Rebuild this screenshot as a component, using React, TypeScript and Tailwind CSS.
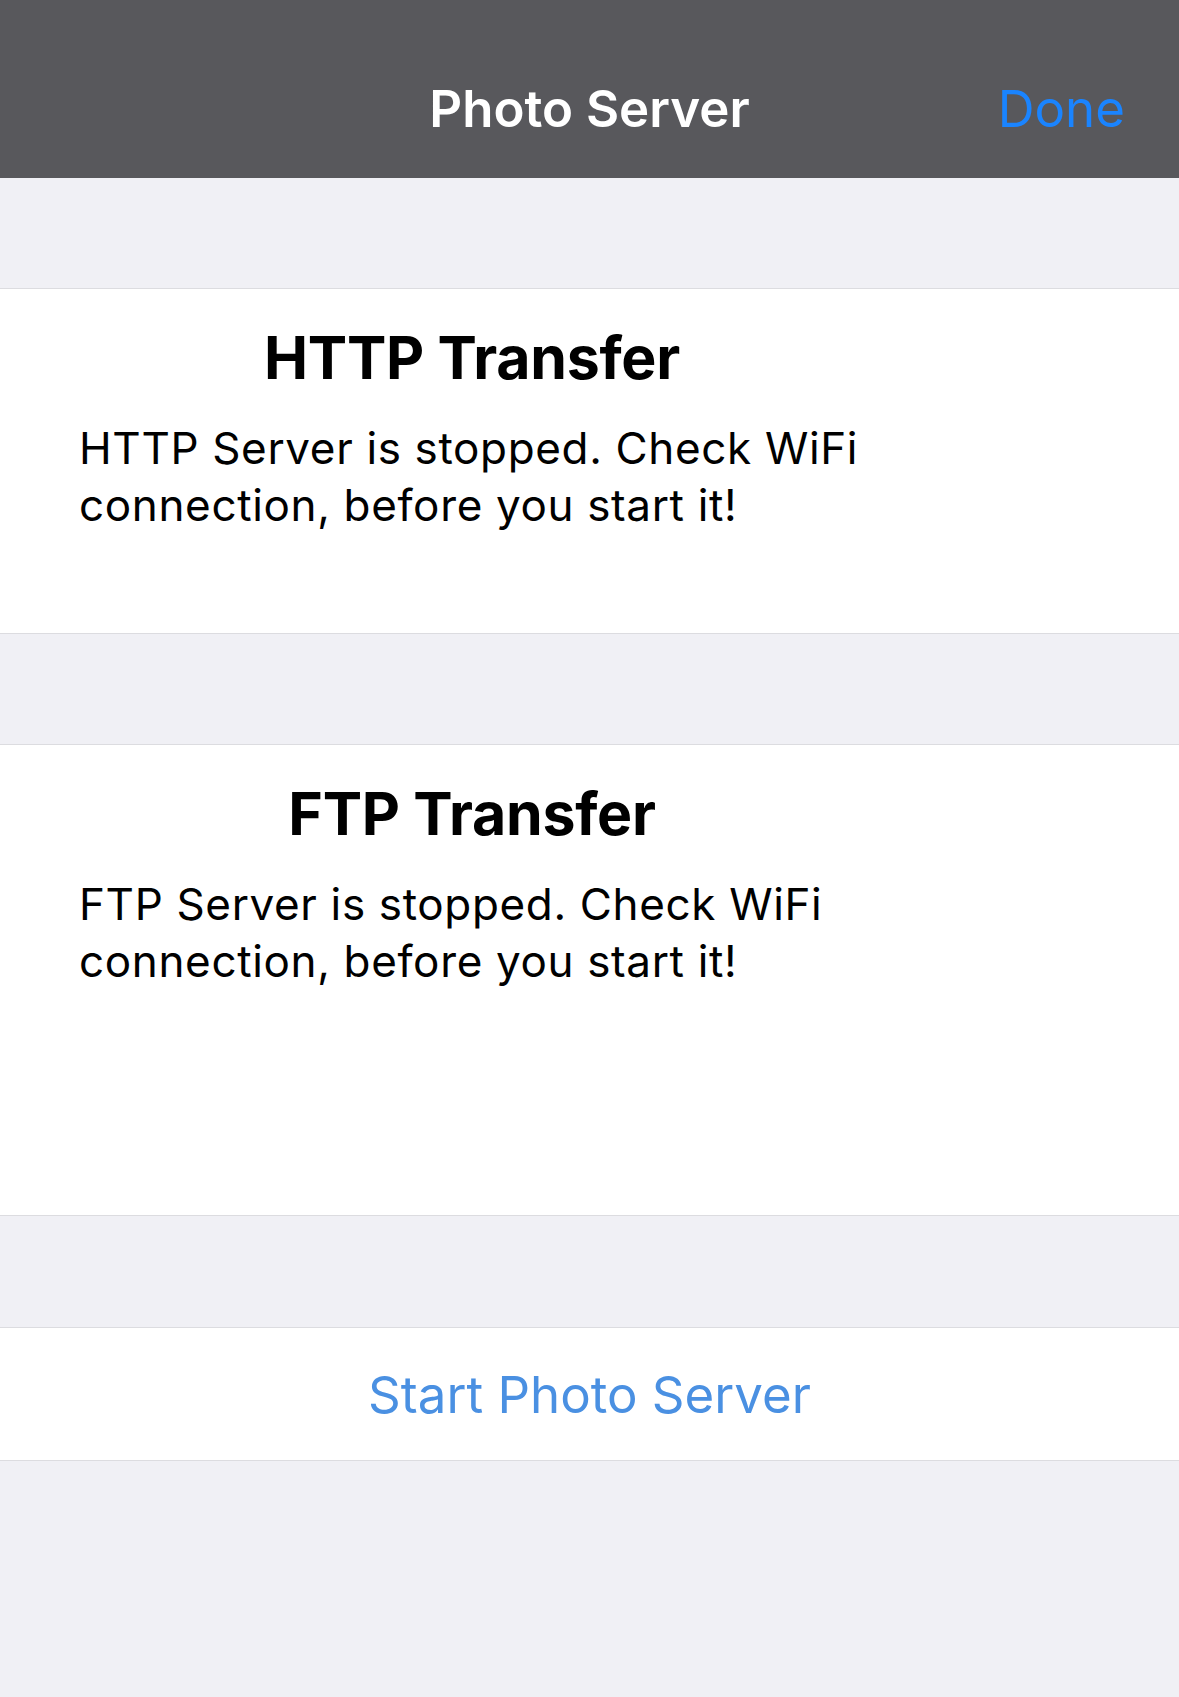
import React from 'react';

const font = { fontFamily: 'Inter, "Noto Sans", sans-serif' };

function TransferCell({ title, lines, height }: { title: string; lines: string[]; height: string }) {
  return (
    <div className={`bg-white border-y border-[#dcdce0] ${height}`}>
      <div className="ml-[79px] w-[786px] pt-[39px]">
        <h2 className="text-center text-[59px] leading-[59px] tracking-[-0.3px] font-bold text-black">{title}</h2>
        <p className="mt-[33px] text-[44px] leading-[57px] tracking-[0.65px] text-black">
          {lines[0]}
          <br />
          {lines[1]}
        </p>
      </div>
    </div>
  );
}

export default function App() {
  return (
    <div className="min-h-[1697px] w-[1179px] bg-[#f0f0f5]" style={font}>
      {/* Nav bar */}
      <header className="h-[178px] bg-[#58585c] pt-[39px] px-[54px] grid grid-cols-[1fr_auto_1fr] items-center">
        <div />
        <h1 className="text-white text-[51px] leading-none font-semibold">Photo Server</h1>
        <button className="justify-self-end text-[#1a84ff] text-[51px] leading-none">Done</button>
      </header>

      <div className="h-[110px]" />
      <TransferCell
        title="HTTP Transfer"
        lines={['HTTP Server is stopped. Check WiFi', 'connection, before you start it!']}
        height="h-[346px]"
      />

      <div className="h-[110px]" />
      <TransferCell
        title="FTP Transfer"
        lines={['FTP Server is stopped. Check WiFi', 'connection, before you start it!']}
        height="h-[472px]"
      />

      <div className="h-[111px]" />
      <div className="h-[134px] bg-white border-y border-[#dcdce0] flex items-center justify-center">
        <button className="text-[#4a90e2] text-[51px] leading-none">Start Photo Server</button>
      </div>
    </div>
  );
}
